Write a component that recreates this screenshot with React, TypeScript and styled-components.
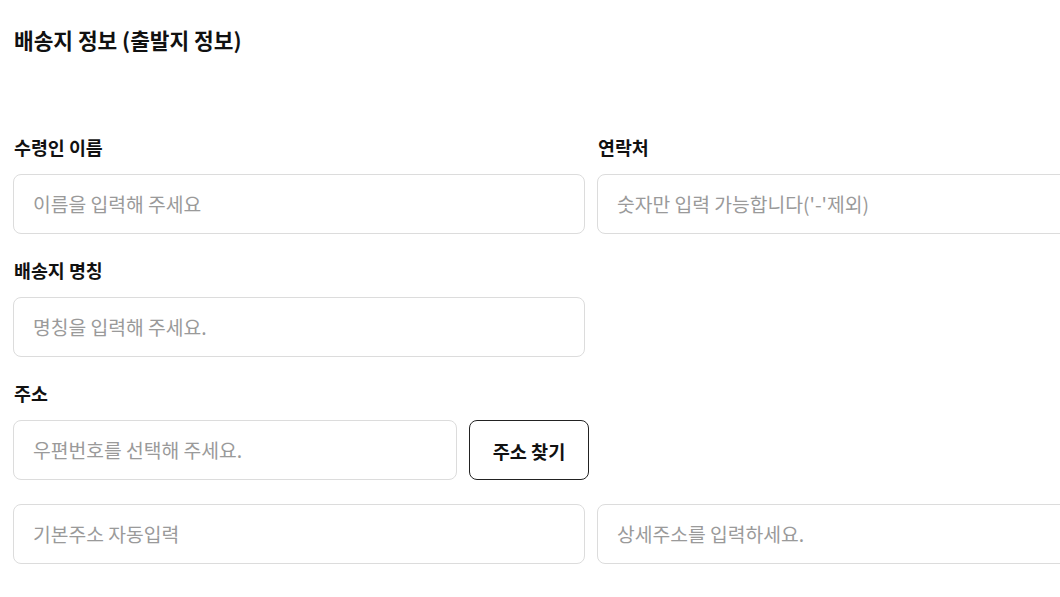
import React from "react";
import styled, { createGlobalStyle } from "styled-components";

const Global = createGlobalStyle`
  html, body { margin: 0; padding: 0; background: #fff; overflow: hidden; }
  body { font-family: "Noto Sans CJK KR", "Noto Sans", sans-serif; color: #111; }
  * { box-sizing: border-box; }
`;

const Page = styled.div`
  width: 1169px;
  padding: 26px 0 0 13px;
`;

const Title = styled.h2`
  margin: 0 0 0 1px;
  font-size: 21.4px;
  font-weight: 700;
  line-height: 28px;
`;

const Form = styled.div`
  margin-top: 81px;
  display: grid;
  grid-template-columns: 572px 572px;
  column-gap: 12px;
  row-gap: 24px;
`;

const Field = styled.div`
  display: flex;
  flex-direction: column;
  gap: 15px;
`;

const Label = styled.label`
  font-size: 18.4px;
  font-weight: 700;
  line-height: 24px;
  padding-left: 1px;
`;

const Input = styled.input<{ $w?: string }>`
  width: ${(p) => p.$w ?? "100%"};
  flex-shrink: 0;
  height: 60px;
  border: 1px solid #dcdcdc;
  border-radius: 8px;
  padding: 0 19px;
  font-family: "Noto Sans CJK KR", "Noto Sans", sans-serif;
  font-size: 19.3px;
  color: #111;
  outline: none;
  &::placeholder { color: #9a9a9a; }
`;

const Row = styled.div`
  display: flex;
  gap: 12px;
`;

const Button = styled.button`
  width: 120px;
  height: 60px;
  border: 1px solid #222;
  border-radius: 8px;
  background: #fff;
  font-family: "Noto Sans CJK KR", "Noto Sans", sans-serif;
  font-size: 18.6px;
  font-weight: 700;
  color: #111;
  flex-shrink: 0;
`;

const Empty = styled.div``;

export default function App() {
  return (
    <>
      <Global />
      <Page>
        <Title>배송지 정보 (출발지 정보)</Title>
        <Form>
          <Field>
            <Label>수령인 이름</Label>
            <Input placeholder="이름을 입력해 주세요" />
          </Field>
          <Field>
            <Label>연락처</Label>
            <Input placeholder="숫자만 입력 가능합니다('-'제외)" />
          </Field>
          <Field>
            <Label>배송지 명칭</Label>
            <Input placeholder="명칭을 입력해 주세요." />
          </Field>
          <Empty />
          <Field>
            <Label>주소</Label>
            <Row>
              <Input $w="444px" placeholder="우편번호를 선택해 주세요." />
              <Button>주소 찾기</Button>
            </Row>
          </Field>
          <Empty />
          <Input placeholder="기본주소 자동입력" />
          <Input placeholder="상세주소를 입력하세요." />
        </Form>
      </Page>
    </>
  );
}
